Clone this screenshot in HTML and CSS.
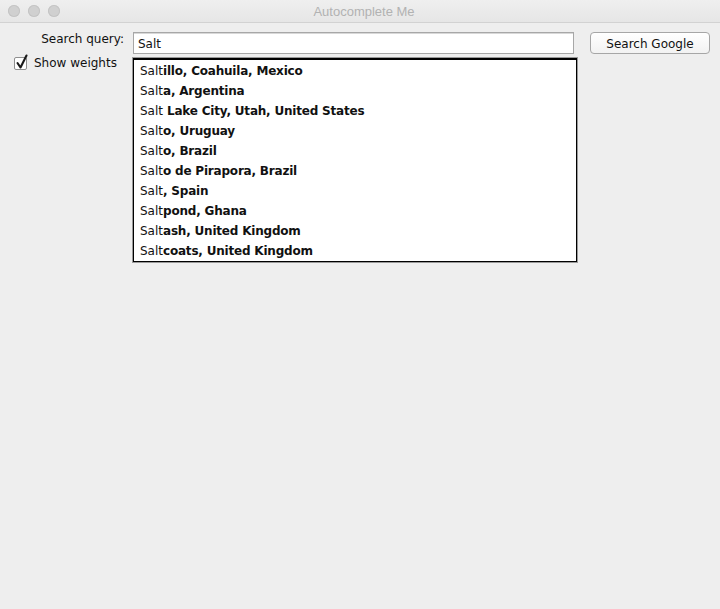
FILE: index.html
```html
<!DOCTYPE html>
<html>
<head>
<meta charset="utf-8">
<link rel="stylesheet" href="styles.css">
</head>
<body>
<div class="window">
  <div class="titlebar">
    <div class="lights"><span class="light"></span><span class="light"></span><span class="light"></span></div>
    <div class="title">Autocomplete Me</div>
  </div>
  <div class="content">
    <div class="label">Search query:</div>
    <div class="field-wrap">
      <div class="field">Salt</div>
      <ul class="popup">
        <li>Salt<b>illo, Coahuila, Mexico</b></li>
        <li>Salt<b>a, Argentina</b></li>
        <li>Salt<b> Lake City, Utah, United States</b></li>
        <li>Salt<b>o, Uruguay</b></li>
        <li>Salt<b>o, Brazil</b></li>
        <li>Salt<b>o de Pirapora, Brazil</b></li>
        <li>Salt<b>, Spain</b></li>
        <li>Salt<b>pond, Ghana</b></li>
        <li>Salt<b>ash, United Kingdom</b></li>
        <li>Salt<b>coats, United Kingdom</b></li>
      </ul>
    </div>
    <div class="button">Search Google</div>
    <label class="check">
      <span class="box"><svg class="tick" width="16" height="18" viewBox="0 0 16 18"><path d="M3.5 10 L6.5 14.5 L12.5 2.5" fill="none" stroke="#1a1a1a" stroke-width="2.1" stroke-linecap="round" stroke-linejoin="round"/></svg></span>
      <span class="check-text">Show weights</span>
    </label>
  </div>
</div>
</body>
</html>
```
FILE: styles.css
```css
html, body {
  margin: 0;
  padding: 0;
  background: #eeeeee;
}
body {
  font-family: "DejaVu Sans", "Noto Sans", sans-serif;
  font-size: 12px;
  color: #111;
}
.window {
  width: 720px;
  height: 609px;
  background: #eeeeee;
}
.titlebar {
  height: 22px;
  border-bottom: 1px solid #d2d2d2;
  background: linear-gradient(#efefef, #e6e6e6);
  display: flex;
  align-items: center;
}
.lights {
  display: flex;
  gap: 8px;
  padding-left: 8px;
}
.light {
  width: 12px;
  height: 12px;
  border-radius: 50%;
  background: #d0d0d0;
  box-shadow: inset 0 0 0 1px #c4c4c4;
}
.title {
  flex: 1;
  text-align: center;
  margin-right: 52px;
  font-family: "Liberation Sans", Arial, sans-serif;
  font-size: 13px;
  color: #b2b2b2;
}
.content {
  display: grid;
  grid-template-columns: 125px 441px 136px;
  grid-template-rows: 22px 20px;
  column-gap: 8px;
  padding-top: 9px;
  row-gap: 1px;
}
.label {
  grid-column: 1;
  text-align: right;
  align-self: start;
  padding-top: 0;
  padding-right: 1px;
}
.field-wrap {
  grid-column: 2;
  position: relative;
}
.field {
  height: 20px;
  border: 1px solid #a7a7a7;
  background: #fff;
  line-height: 22px;
  padding-left: 4px;
  box-shadow: inset 0 1px 0 #d8d8d8;
}
.button {
  grid-column: 3;
  margin-left: 8px;
  width: 118px;
  height: 20px;
  border: 1px solid #a6a6a6;
  border-radius: 4px;
  background: linear-gradient(#ffffff, #f2f2f2);
  text-align: center;
  line-height: 22px;
}
.check {
  grid-column: 1;
  grid-row: 2;
  display: flex;
  align-items: flex-start;
  gap: 7px;
  padding-left: 14px;
  white-space: nowrap;
}
.check-text {
  line-height: 16px;
  margin-top: 0;
}
.box {
  width: 11px;
  height: 11px;
  margin-top: 2px;
  border: 1px solid #8f8f8f;
  border-radius: 2px;
  background: #fff;
  position: relative;
}
.tick {
  position: absolute;
  left: -1px;
  top: -5px;
}
.popup {
  position: absolute;
  left: -1px;
  top: 25px;
  width: 440px;
  margin: 0;
  list-style: none;
  background: #fff;
  border: 1px solid #999;
  box-shadow: inset 0 0 0 1px #000, inset 0 2px 0 #000;
  padding: 3px 2px 1px 2px;
}
.popup li {
  height: 20px;
  line-height: 20px;
  padding-left: 5px;
  white-space: nowrap;
}
.popup b {
  font-weight: bold;
  letter-spacing: -0.2px;
}
```
